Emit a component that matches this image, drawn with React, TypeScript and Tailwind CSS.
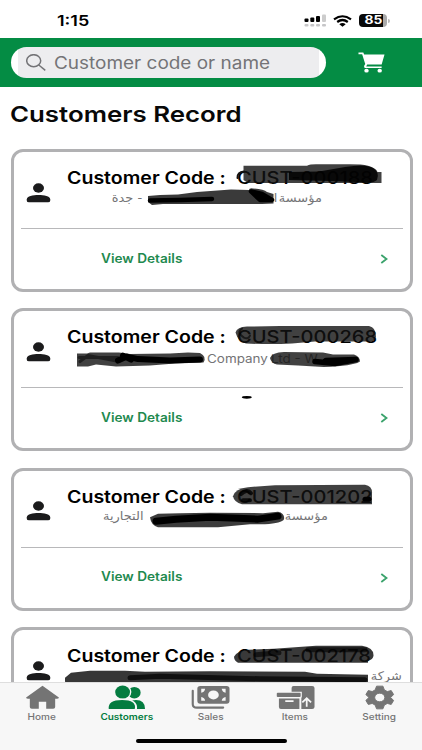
import type { ReactNode } from "react";

const viewBoxes = ["14 152 396 137", "14 311.4 396 137", "14 470.8 396 137", "14 630.2 396 137"];

// Freehand marker strokes laid over the private parts of each record.
function Redaction({ index }: { index: number }) {
  return (
    <svg className="absolute inset-0 h-full w-full" viewBox={viewBoxes[index]} preserveAspectRatio="none" strokeLinejoin="round" strokeLinecap="round">
      {index === 0 && (
        <>
          <path d="M243.500 165.800H307Q310 164.300 316 164.300H350Q362 164.300 368 165.800Q376 168 377.500 172H381.500V183H248L243.500 180Z" fill="#111" fillOpacity=".8" />
          <path d="M289 172L319 171.500L345 167Q366 163.500 373 168Q380 172 377 180Q374 183 366 182.500L330 181L289 180Z" fill="#000" fillOpacity=".85" />
          <path d="M237.500 178Q237 172 244 171.500" stroke="#111" strokeWidth="2" fill="none" />
          <path d="M148 196L160 195L178 194.500L197 192L231 189.500L249 190Q249 188 253 188.500Q264 189 267 192L273.500 194V203.500L262 204L242 204L163 204L152 205L148 202Z" fill="#181818" fillOpacity=".85" />
          <path d="M251 191.500L262 194L272 200L260 200ZM150 200.500L180 200L212 199" stroke="#000" strokeWidth="4.500" />
        </>
      )}
      {index === 1 && (
        <>
          <path d="M235.500 333Q237 327.500 247 327L280 326.500H369Q376 328 376 337Q375 341.500 371 342L315 342L292 344Q270 345 246 344Q238 342 235.500 333Z" fill="#111" fillOpacity=".8" />
          <path d="M242 329Q236 333 244 338Q248 340 250 336" stroke="#000" strokeOpacity=".6" strokeWidth="2" fill="none" />
          <path d="M77 354H87L90 353H119L130 354.500L170 354L188 353L200 353.500Q207 357 203.500 363L175 364L150 366L116 367L96 365L88 367H77Z" fill="#111" fillOpacity=".8" />
          <path d="M118 361L127 357L138 359.500L170 361L200 360M123 356L131 360" stroke="#000" strokeWidth="6" fill="none" />
          <path d="M79 358H118M80 362L88 356L119 362" stroke="#000" strokeOpacity=".5" strokeWidth="3" fill="none" />
          <path d="M270 358.500Q272 353 284 352.500L323 353L333 355H354Q360 357 360 362Q356 365 340 366.500Q325 368 315 367L298 366L277 365Q271 364 270 358.500Z" fill="#111" fillOpacity=".8" />
          <path d="M315 362L335 364L356 360L326 361" stroke="#000" strokeWidth="5.500" fill="none" />
          <ellipse cx="246.800" cy="397.800" rx="5" ry="1.300" fill="#000" />
        </>
      )}
      {index === 2 && (
        <>
          <path d="M233 496Q235 488.500 248 487L275 485L365 484.500Q372 486 372 492V504H242Q234 502 233 496Z" fill="#111" fillOpacity=".8" />
          <path d="M241 494Q247 488 251 493M243 500H250" stroke="#000" strokeOpacity=".8" strokeWidth="4" fill="none" />
          <path d="M365 499H369" stroke="#000" strokeWidth="5" />
          <path d="M150 517L158 513.500L180 513L210 512.500L263 513L278 511.500Q285 513 284 519Q282 523 265 524L250 524L218 527H158Q151 525 150 517Z" fill="#111" fillOpacity=".82" />
          <path d="M156 521L176 519L210 517L238 518L258 519L278 516" stroke="#000" strokeWidth="7" fill="none" />
        </>
      )}
      {index === 3 && (
        <>
          <path d="M234 657Q237 651 248 650L274 649L316 646H362Q374 648 373.500 656Q373 660 368 661V663H238Q234 661 234 657Z" fill="#111" fillOpacity=".83" />
          <path d="M256 655L279 653M308 650L365 650" stroke="#000" strokeOpacity=".6" strokeWidth="5" />
          <path d="M65 678L71 673L90 671L125 671L145 672L210 671.500L305 672L317 674L368 675V684H218L160 682.500L120 684H70L65 682Z" fill="#111" fillOpacity=".84" />
          <path d="M130 678L160 676.500L260 679L365 680" stroke="#000" strokeOpacity=".7" strokeWidth="5" fill="none" />
        </>
      )}
    </svg>
  );
}

function Arabic({ box, children }: { box: string; children: ReactNode }) {
  return (
    <span className={`${box} flex shrink-0 -translate-y-[3px]`} dir="rtl">
      <span className="origin-right scale-x-[1.080] font-['DejaVu_Sans','Noto_Sans',sans-serif] text-[12px] whitespace-nowrap">{children}</span>
    </span>
  );
}

function Latin({ box, children }: { box: string; children: ReactNode }) {
  return (
    <span className={`${box} flex shrink-0`}>
      <span className="origin-left scale-x-[1.170] text-[11.500px] whitespace-nowrap">{children}</span>
    </span>
  );
}

const customers = [
  {
    code: "CUST-000188",
    name: (
      <>
        <Arabic box="ml-[42px] w-[33px]">- جدة</Arabic>
        <Arabic box="ml-[129px] w-[6px]">ا</Arabic>
        <Arabic box="ml-[4px] w-[41px]">مؤسسة</Arabic>
      </>
    ),
  },
  {
    code: "CUST-000268",
    name: (
      <>
        <Latin box="ml-[139.500px] w-[62px]">Company</Latin>
        <Latin box="ml-[2px] w-[80px]">Ltd - W</Latin>
      </>
    ),
  },
  {
    code: "CUST-001202",
    name: (
      <>
        <Arabic box="ml-[37px] w-[40px]">التجارية</Arabic>
        <Arabic box="ml-[143px] w-[41px]">مؤسسة</Arabic>
      </>
    ),
  },
  { code: "CUST-002178", name: <Arabic box="ml-[307px] w-[28px]">شركة</Arabic> },
];

function Card({ index }: { index: number }) {
  const { code, name } = customers[index];
  return (
    <article className="relative h-[142.900px] shrink-0 rounded-[12px] border-[3px] border-[#b1b1b3] bg-white">
      <div className="flex h-[76px] pt-[15.500px]">
        <svg className="mt-[15px] ml-[11.500px] h-[20px] w-[25px] shrink-0" viewBox="0 0 25 20" fill="#1b1b1c">
          <ellipse cx="12.500" cy="5" rx="5.500" ry="4.700" />
          <path d="M.8 16.300C.8 13 7 12 12.500 12S24.200 13 24.200 16.300V17.700Q24.200 19.300 22 19.300H3Q.8 19.300 .8 17.700Z" />
        </svg>
        <div className="ml-[16.500px] grow">
          <div className="flex h-[22px] items-center text-[17px] font-semibold whitespace-nowrap text-black">
            <span className="w-[170px]"><span className="block w-fit origin-left scale-x-[1.150]">Customer Code :</span></span>
            <span className="block w-fit origin-left scale-x-[1.180] font-medium">{code}</span>
          </div>
          <div className="flex h-[22px] items-center text-[#747476]">{name}</div>
        </div>
      </div>
      <div className="mx-[7px] border-t border-[#b8b8ba]" />
      <div className="flex h-[60px] items-center justify-between pr-[22.500px] pl-[87px] text-[#1f8a50]">
        <span className="block origin-left scale-x-[1.090] text-[12.500px] font-semibold">View Details</span>
        <svg className="h-[10px] w-[8px]" viewBox="0 0 8 10" fill="none" stroke="#3ba36c" strokeWidth="1.800"><path d="M1.300 1L6.500 5L1.300 9" /></svg>
      </div>
      <Redaction index={index} />
    </article>
  );
}

function Tab({ label, active = false, children }: { label: string; active?: boolean; children: ReactNode }) {
  return (
    <div className={`flex w-[84.300px] flex-col items-center ${active ? "text-[#047c40]" : "text-[#747474]"}`}>
      <svg className="h-[25px] w-[39px]" viewBox="0 0 40 26" preserveAspectRatio="none" fill="currentColor">{children}</svg>
      <span className={`block h-[14px] scale-x-[1.110] text-[9px] leading-[13px] ${active ? "font-semibold" : "font-medium"}`}>{label}</span>
    </div>
  );
}

export default function App() {
  return (
    <div className="relative flex h-[750px] w-[422px] flex-col overflow-hidden bg-white font-['Inter','Liberation_Sans',sans-serif]">
      <div className="flex h-[38px] shrink-0 items-start justify-between pt-[11px] pr-[32px] pl-[57px]">
        <span className="block origin-left scale-x-[1.200] text-[15px] leading-[20px] font-semibold">1:15</span>
        <div className="mt-[3px] flex items-center">
          <svg className="h-[13px] w-[23px]" viewBox="0 0 23 13">
            <rect x=".5" y="4.500" width="4" height="3.500" rx="1" /><rect x="6.300" y="3.500" width="4" height="4.500" rx="1" /><rect x="12" y="2" width="4" height="6" rx="1" /><rect x="18" y=".5" width="4" height="7.500" rx="1" fill="#ccc" />
            <g fill="#c6c6c8"><rect x=".5" y="10" width="4" height="2.500" rx="1" /><rect x="6.300" y="10" width="4" height="2.500" rx="1" /><rect x="12" y="10" width="4" height="2.500" rx="1" /><rect x="18" y="10" width="4" height="2.500" rx="1" /></g>
          </svg>
          <svg className="ml-[6px] h-[12px] w-[19px]" viewBox="0 0 19 12" fill="none" stroke="black" strokeWidth="2.200">
            <path d="M1 4.300Q9.500 -1.800 18 4.300M4.200 7Q9.500 3 14.800 7" /><path d="M6.300 9.200Q9.500 6.800 12.700 9.200L9.500 11.700Z" fill="black" stroke="none" />
          </svg>
          <div className="ml-[7px] flex h-[13px] w-[28px] items-center justify-center overflow-hidden rounded-[4px] bg-[linear-gradient(90deg,#080808_86%,#aaa_86%)]">
            <span className="block scale-x-[1.200] text-[11.500px] leading-[13px] font-bold text-white">85</span>
          </div>
          <div className="ml-[1px] h-[4px] w-[2px] rounded-r bg-[#bbb]" />
        </div>
      </div>
      <header className="flex h-[49px] shrink-0 items-center bg-[#048c44] pl-[11px]">
        <div className="flex h-[31px] w-[315px] items-center overflow-hidden rounded-full bg-[linear-gradient(90deg,#fff_7px,#ededef_7px,#ededef_308px,#fff_308px)] pl-[15px] text-[#747477]">
          <svg className="h-[17px] w-[20px] shrink-0" viewBox="0 0 20 17" fill="none" stroke="currentColor" strokeWidth="1.500"><ellipse cx="7.700" cy="6.700" rx="7" ry="6" /><path d="M12.800 11L19.300 16.300" /></svg>
          <span className="ml-[8px] block origin-left translate-y-[0.600px] scale-x-[1.115] text-[17px] whitespace-nowrap">Customer code or name</span>
        </div>
        <svg className="ml-[32px] h-[21px] w-[27px]" viewBox="0 0 28 21" preserveAspectRatio="none" fill="white">
          <path d="M.5 .5H5.500L6.400 2.500H27.500L24.500 12.500H9.500L8.500 14.500H24.500V16H7.500Q5.500 15.500 6.500 13.500L7.500 12L4.300 2.200H.5Z" /><ellipse cx="8.800" cy="18.700" rx="2.300" ry="1.900" /><ellipse cx="22.500" cy="18.700" rx="2.300" ry="1.900" />
        </svg>
      </header>
      <main className="flex grow flex-col overflow-hidden pr-[9px] pl-[11px]">
        <h1 className="-ml-px flex h-[62px] shrink-0 items-start pt-[10.500px] text-[22px] leading-[32px] font-semibold text-[#080808]"><span className="block origin-left scale-x-[1.175]">Customers Record</span></h1>
        <div className="flex flex-col gap-[16.500px]">
          {customers.map((c, i) => <Card key={c.code} index={i} />)}
        </div>
      </main>
      <nav className="absolute inset-x-0 bottom-0 flex h-[68px] flex-col border-t border-[#dedede] bg-[#f7f7f7]">
        <div className="flex pt-[2px]">
          <Tab label="Home"><path d="M20 .8L36.800 13Q37.300 14.200 35 14.200H33V23Q33 24.800 31 24.800H23.800V17.500H16.200V24.800H9Q7 24.800 7 23V14.200H5Q2.700 14.200 3.200 13Z" /></Tab>
          <Tab label="Customers" active>
            <ellipse cx="28" cy="8" rx="6.500" ry="6" /><path d="M26 16Q39 14 39 25H29Z" />
            <ellipse cx="16" cy="7.300" rx="9" ry="8" fill="#f7f7f7" /><ellipse cx="16" cy="7.300" rx="7.600" ry="6.800" />
            <path d="M1.500 25Q0 15.500 15.500 15.500T29.500 25Z" stroke="#f7f7f7" strokeWidth="2.400" /><path d="M1.800 25Q.5 15.500 15.500 15.500T28.500 25Z" />
          </Tab>
          <Tab label="Sales"><path d="M1.800 6V20Q1.800 23.500 6 23.500H33" fill="none" stroke="currentColor" strokeWidth="2.200" strokeLinecap="round" /><rect x="6.500" y="1" width="33" height="18.500" rx="3" /><g fill="#f7f7f7"><ellipse cx="23" cy="10.300" rx="5.500" ry="4.700" /><path d="M10.500 4H14.500Q14 7.500 10.500 8ZM31.500 4H35.500V8Q32 7.500 31.500 4ZM10.500 12.500Q14 13 14.500 16.500H10.500ZM35.500 12.500V16.500H31.500Q32 13 35.500 12.500Z" /></g></Tab>
          <Tab label="Items"><path d="M16 7V3Q16 1 18 1H37Q39.500 1 39.500 3V23Q39.500 25 37 25H26V13H26.500V7Z" /><rect x=".8" y="8" width="24.500" height="4.500" rx="1" /><path d="M3 14H24V25H5Q3 25 3 23Z" /><path d="M9.500 16.800H18M31.500 22.500V14.500M27 18L31.500 13.800L36 18" stroke="#f7f7f7" strokeWidth="1.800" fill="none" /></Tab>
          <Tab label="Setting"><path fillRule="evenodd" d="M17 1.200H23.500L25 5.200L28 6.800L32 5.800L34.500 10L31.300 13L34.500 16L32 20.200L28 19.200L25 20.800L23.500 24.800H17L15.500 20.800L12.500 19.200L8.500 20.200L6 16L9.200 13L6 10L8.500 5.800L12.500 6.800L15.500 5.200ZM20.250 8.500A5.200 4.500 0 1 0 20.250 17.500A5.200 4.500 0 1 0 20.250 8.500Z" stroke="currentColor" strokeWidth="1" strokeLinejoin="round" /></Tab>
        </div>
        <div className="mt-[15px] h-[4px] w-[151px] self-center rounded-full bg-black" />
      </nav>
    </div>
  );
}
